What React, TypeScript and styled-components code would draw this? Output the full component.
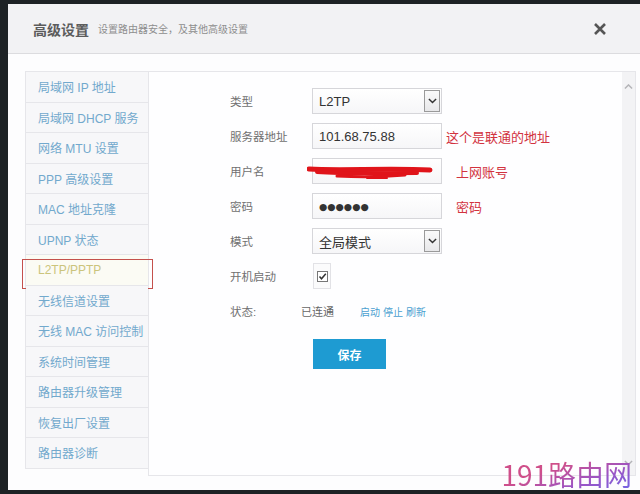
import React from 'react';
import styled, { createGlobalStyle } from 'styled-components';

const GlobalStyle = createGlobalStyle`
  html, body {
    margin: 0;
    padding: 0;
    background: #1d2225;
  }
  * {
    box-sizing: border-box;
  }
`;

const FONT = `"Liberation Sans", "Noto Sans CJK SC", sans-serif`;

const Page = styled.div`
  position: relative;
  width: 640px;
  height: 494px;
  padding: 4px 0 4px 8px;
  background: #1d2225;
  font-family: ${FONT};
  overflow: hidden;
`;

const Dialog = styled.div`
  width: 632px;
  height: 486px;
  background: #fdfdfe;
  display: flex;
  flex-direction: column;
`;

const Header = styled.div`
  height: 50px;
  flex-shrink: 0;
  display: flex;
  align-items: center;
  padding: 0 20px 0 25px;
  background: #f2f2f4;
  border-bottom: 1px solid #dcdcdf;
`;

const Title = styled.h1`
  margin: 0;
  font-size: 14px;
  font-weight: bold;
  color: #5c5c5c;
`;

const Subtitle = styled.span`
  margin-left: 9px;
  font-size: 10px;
  color: #8e8e8e;
`;

const CloseButton = styled.div`
  margin-left: auto;
  width: 16px;
  height: 16px;
  display: flex;
  align-items: center;
  justify-content: center;
  margin-right: 12px;
`;

const Body = styled.div`
  flex: 1;
  display: flex;
  align-items: flex-start;
  padding: 17px 4px 0 17px;
`;

const Sidebar = styled.ul`
  width: 124px;
  margin: 0;
  padding: 0;
  list-style: none;
  border: 1px solid #e6e6ea;
  border-bottom: none;
  flex-shrink: 0;
`;

const NavItem = styled.li<{ $active?: boolean }>`
  position: relative;
  height: 30.5px;
  display: flex;
  align-items: center;
  padding-left: 12px;
  font-size: 12px;
  white-space: nowrap;
  color: ${({ $active }) => ($active ? '#cbc47c' : '#72a9cd')};
  background: ${({ $active }) => ($active ? '#fbfbf4' : '#f7f7f9')};
  border-bottom: 1px solid #e6e6ea;

  ${({ $active }) =>
    $active &&
    `
    &::after {
      content: '';
      position: absolute;
      top: 4px;
      bottom: -4px;
      left: -4px;
      right: -5px;
      border: 1px solid #c4504c;
    }
  `}
`;

const Panel = styled.div`
  flex: 1;
  height: 405px;
  margin-left: -1px;
  display: flex;
  border: 1px solid #e6e6ea;
  background: #fefeff;
`;

const Form = styled.div`
  flex: 1;
  padding: 16px 0 0 81px;
`;

const Row = styled.div`
  position: relative;
  display: flex;
  align-items: center;
  height: 26px;
  margin-bottom: 9px;
`;

const Label = styled.span<{ $width?: number }>`
  width: ${({ $width }) => $width ?? 82}px;
  flex-shrink: 0;
  font-size: 11.5px;
  color: #707070;
`;

const Field = styled.div`
  position: relative;
  width: 130px;
  height: 26px;
  display: flex;
  align-items: center;
  padding-left: 6px;
  border: 1px solid #d6d6da;
  background: linear-gradient(#ffffff, #f6f6f8);
  font-size: 13px;
  color: #333;
`;

const Dots = styled.span`
  font-family: "DejaVu Sans", sans-serif;
  font-size: 9.5px;
  letter-spacing: 0;
  color: #333;
`;

const SelectArrow = styled.div`
  position: absolute;
  right: 1px;
  top: 1px;
  bottom: 1px;
  width: 16px;
  display: flex;
  align-items: center;
  justify-content: center;
  border: 1px solid #9a9a9a;
  background: linear-gradient(#fafafa, #e8e8ea);
`;

const Note = styled.span<{ $gap: number }>`
  margin-left: ${({ $gap }) => $gap}px;
  font-size: 13px;
  color: #d2333f;
  white-space: nowrap;
`;

const CheckFrame = styled.div`
  width: 18px;
  height: 26px;
  margin-left: 1px;
  display: flex;
  align-items: center;
  justify-content: center;
  border: 1px solid #e2e2e6;
  background: #fbfbfc;
`;

const CheckBox = styled.div`
  width: 11px;
  height: 11px;
  display: flex;
  align-items: center;
  justify-content: center;
  border: 1px solid #777;
  background: #fff;
`;

const StatusValue = styled.span`
  width: 59px;
  font-size: 11px;
  color: #666;
`;

const Links = styled.span`
  display: flex;
  gap: 3px;
  font-size: 10px;
  color: #4a9fd0;
`;

const SaveButton = styled.button`
  width: 73px;
  height: 30px;
  margin: 6px 0 0 83px;
  border: none;
  background: #1e9bd2;
  color: #fff;
  font-family: ${FONT};
  font-size: 12px;
  font-weight: bold;
`;

const Scrollbar = styled.div`
  width: 13px;
  display: flex;
  flex-direction: column;
  justify-content: space-between;
  align-items: center;
  padding: 12px 0 10px;
  background: #f3f3f5;
`;

const Scribble = styled.svg`
  position: absolute;
  left: -6px;
  top: 6px;
  pointer-events: none;
`;

const Watermark = styled.div`
  position: absolute;
  right: 8px;
  bottom: 4px;
  font-family: "Noto Sans CJK SC", sans-serif;
  font-size: 28px;
  line-height: 32px;
  background: linear-gradient(160deg, #cf4f8a 35%, #9a55c6 70%, #6f66e6);
  -webkit-background-clip: text;
  background-clip: text;
  color: transparent;
`;

const Chevron = ({ up, color, size = 10 }: { up?: boolean; color: string; size?: number }) => (
  <svg width={size} height={size * 0.6} viewBox="0 0 10 6">
    <path
      d={up ? 'M1 5 L5 1 L9 5' : 'M1 1 L5 5 L9 1'}
      fill="none"
      stroke={color}
      strokeWidth="1.6"
    />
  </svg>
);

const menu = [
  '局域网 IP 地址',
  '局域网 DHCP 服务',
  '网络 MTU 设置',
  'PPP 高级设置',
  'MAC 地址克隆',
  'UPNP 状态',
  'L2TP/PPTP',
  '无线信道设置',
  '无线 MAC 访问控制',
  '系统时间管理',
  '路由器升级管理',
  '恢复出厂设置',
  '路由器诊断',
];

const App = () => {
  return (
    <>
      <GlobalStyle />
      <Page>
        <Dialog>
          <Header>
            <Title>高级设置</Title>
            <Subtitle>设置路由器安全，及其他高级设置</Subtitle>
            <CloseButton>
              <svg width="14" height="14" viewBox="0 0 14 14">
                <path d="M2 2 L12 12 M12 2 L2 12" stroke="#555" strokeWidth="2.6" />
              </svg>
            </CloseButton>
          </Header>
          <Body>
            <Sidebar>
              {menu.map((item) => (
                <NavItem key={item} $active={item === 'L2TP/PPTP'}>
                  {item}
                </NavItem>
              ))}
            </Sidebar>
            <Panel>
              <Form>
                <Row>
                  <Label>类型</Label>
                  <Field>
                    L2TP
                    <SelectArrow>
                      <Chevron color="#333" size={9} />
                    </SelectArrow>
                  </Field>
                </Row>
                <Row>
                  <Label>服务器地址</Label>
                  <Field>101.68.75.88</Field>
                  <Note $gap={4}>这个是联通的地址</Note>
                </Row>
                <Row>
                  <Label>用户名</Label>
                  <Field>
                    <Scribble width="130" height="20" viewBox="0 0 130 20">
                      <path d="M2 4 C30 6 80 3 123 5" stroke="#e0141a" strokeWidth="5" fill="none" strokeLinecap="round" />
                      <path d="M10 7 C40 9 70 8 110 8" stroke="#e0141a" strokeWidth="4" fill="none" strokeLinecap="round" />
                      <path d="M30 11 C50 12 75 12 98 10" stroke="#e0141a" strokeWidth="3" fill="none" strokeLinecap="round" />
                      <path d="M60 13 L80 13" stroke="#e0141a" strokeWidth="2" fill="none" strokeLinecap="round" />
                    </Scribble>
                  </Field>
                  <Note $gap={14}>上网账号</Note>
                </Row>
                <Row>
                  <Label>密码</Label>
                  <Field>
                    <Dots>●●●●●●</Dots>
                  </Field>
                  <Note $gap={14}>密码</Note>
                </Row>
                <Row>
                  <Label>模式</Label>
                  <Field>
                    全局模式
                    <SelectArrow>
                      <Chevron color="#333" size={9} />
                    </SelectArrow>
                  </Field>
                </Row>
                <Row>
                  <Label>开机启动</Label>
                  <CheckFrame>
                    <CheckBox>
                      <svg width="9" height="9" viewBox="0 0 9 9">
                        <path d="M1.5 4.5 L3.5 6.8 L7.8 1.8" stroke="#333" strokeWidth="1.5" fill="none" />
                      </svg>
                    </CheckBox>
                  </CheckFrame>
                </Row>
                <Row>
                  <Label $width={71}>状态:</Label>
                  <StatusValue>已连通</StatusValue>
                  <Links>
                    <span>启动</span>
                    <span>停止</span>
                    <span>刷新</span>
                  </Links>
                </Row>
                <SaveButton>保存</SaveButton>
              </Form>
              <Scrollbar>
                <Chevron up color="#b4b4b8" size={9} />
                <Chevron color="#b4b4b8" size={9} />
              </Scrollbar>
            </Panel>
          </Body>
        </Dialog>
        <Watermark>191路由网</Watermark>
      </Page>
    </>
  );
};

export default App;
